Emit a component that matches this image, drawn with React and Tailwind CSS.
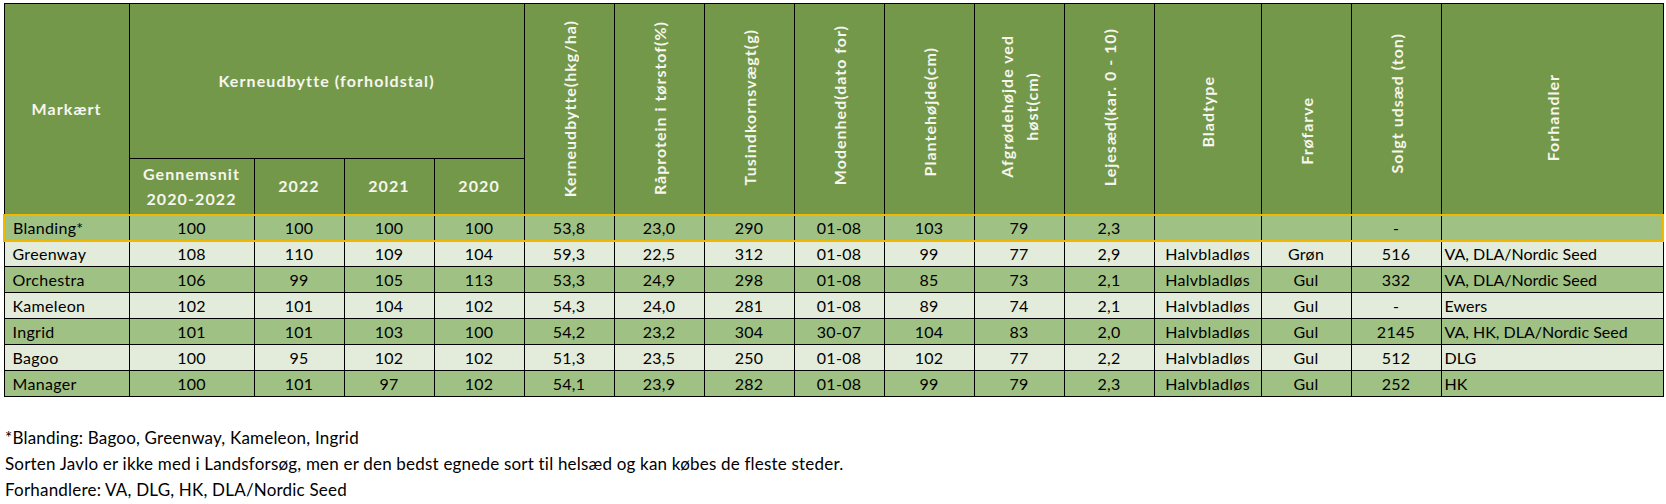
import React from 'react';

const rows = [
  ['Blanding*', '100', '100', '100', '100', '53,8', '23,0', '290', '01-08', '103', '79', '2,3', '', '', '-', ''],
  ['Greenway', '108', '110', '109', '104', '59,3', '22,5', '312', '01-08', '99', '77', '2,9', 'Halvbladløs', 'Grøn', '516', 'VA, DLA/Nordic Seed'],
  ['Orchestra', '106', '99', '105', '113', '53,3', '24,9', '298', '01-08', '85', '73', '2,1', 'Halvbladløs', 'Gul', '332', 'VA, DLA/Nordic Seed'],
  ['Kameleon', '102', '101', '104', '102', '54,3', '24,0', '281', '01-08', '89', '74', '2,1', 'Halvbladløs', 'Gul', '-', 'Ewers'],
  ['Ingrid', '101', '101', '103', '100', '54,2', '23,2', '304', '30-07', '104', '83', '2,0', 'Halvbladløs', 'Gul', '2145', 'VA, HK, DLA/Nordic Seed'],
  ['Bagoo', '100', '95', '102', '102', '51,3', '23,5', '250', '01-08', '102', '77', '2,2', 'Halvbladløs', 'Gul', '512', 'DLG'],
  ['Manager', '100', '101', '97', '102', '54,1', '23,9', '282', '01-08', '99', '79', '2,3', 'Halvbladløs', 'Gul', '252', 'HK'],
];

const widths = [125, 125, 90, 90, 90, 90, 90, 90, 90, 90, 90, 90, 107, 90, 90, 222];

// shift = nudge to follow where each heading sits in the sheet
const rotated = [
  { lines: ['Kerneudbytte(hkg/ha)'], shift: 'translate-y-0' },
  { lines: ['Råprotein i tørstof(%)'], shift: 'translate-y-[-1px]' },
  { lines: ['Tusindkornsvægt(g)'], shift: 'translate-y-[-2px]' },
  { lines: ['Modenhed(dato for)'], shift: 'translate-y-[-4px]' },
  { lines: ['Plantehøjde(cm)'], shift: 'translate-y-[3px]' },
  { lines: ['Afgrødehøjde ved', 'høst(cm)'], shift: 'translate-y-[-2px]' },
  { lines: ['Lejesæd(kar. 0 - 10)'], shift: 'translate-y-[-2px]' },
  { lines: ['Bladtype'], shift: 'translate-y-[3px]' },
  { lines: ['Frøfarve'], shift: 'translate-y-[22px]' },
  { lines: ['Solgt udsæd (ton)'], shift: 'translate-y-[-5px]' },
  { lines: ['Forhandler'], shift: 'translate-y-[9px]' },
];

function RotatedHead({ lines, shift }) {
  return (
    <th rowSpan={2} className="border border-black p-0 align-middle">
      <div className="flex h-[205px] items-center justify-center">
        <span className={`[writing-mode:vertical-rl] rotate-180 ${shift} text-center text-[16px] leading-[25px] tracking-[1px]`}>
          {lines.map((l, i) => (
            <React.Fragment key={i}>
              {i > 0 && <br />}
              {l}
            </React.Fragment>
          ))}
        </span>
      </div>
    </th>
  );
}

export default function App() {
  return (
    <div className="w-[1666px] h-[504px] bg-white pt-[3px] pl-[3px] font-['Lato','Liberation_Sans',sans-serif] text-[16px] text-black overflow-hidden">
      <table className="table-fixed border-collapse w-[1660px]">
        <colgroup>
          {widths.map((w, i) => (
            <col key={i} style={{ width: w }} />
          ))}
        </colgroup>
        <thead className="bg-[#74984a] text-[#f6f6ee] font-bold">
          <tr className="h-[155px] text-[16px] tracking-[1.1px]">
            <th rowSpan={2} className="border border-black p-0 align-middle">Markært</th>
            <th colSpan={4} className="border border-black p-0 align-middle">Kerneudbytte (forholdstal)</th>
            {rotated.map((h, i) => (
              <RotatedHead key={i} lines={h.lines} shift={h.shift} />
            ))}
          </tr>
          <tr className="h-[56px] text-[16px] tracking-[1.1px]">
            <th className="border border-black p-0 leading-[25px]">
              Gennemsnit
              <br />
              2020-2022
            </th>
            <th className="border border-black p-0">2022</th>
            <th className="border border-black p-0">2021</th>
            <th className="border border-black p-0">2020</th>
          </tr>
        </thead>
        <tbody className="tracking-[0.3px]">
          {rows.map((r, ri) => {
            const first = ri === 0;
            const bg = ri % 2 === 0 ? 'bg-[#a0c184]' : 'bg-[#e3ecda]';
            return (
              <tr key={ri} className={`h-[26px] ${bg}`}>
                {r.map((c, ci) => {
                  let align = 'text-center';
                  if (ci === 0) align = 'text-left pl-[8px]';
                  if (ci === 15) align = 'text-left pl-[3px] tracking-normal';
                  let edge = 'border border-black';
                  if (first) {
                    edge = 'border border-black border-y-2 border-y-[#f2b700]';
                    if (ci === 0) edge += ' border-l-2 border-l-[#f2b700]';
                    if (ci === 15) edge += ' border-r-2 border-r-[#f2b700]';
                  }
                  return (
                    <td key={ci} className={`${edge} ${align} p-0 leading-[24px] whitespace-nowrap`}>
                      {c}
                    </td>
                  );
                })}
              </tr>
            );
          })}
        </tbody>
      </table>
      <div className="mt-[28px] pl-[2px] text-[17px] leading-[26px] tracking-[0.2px]">
        <p>*Blanding: Bagoo, Greenway, Kameleon, Ingrid</p>
        <p>Sorten Javlo er ikke med i Landsforsøg, men er den bedst egnede sort til helsæd og kan købes de fleste steder.</p>
        <p>Forhandlere: VA, DLG, HK, DLA/Nordic Seed</p>
      </div>
    </div>
  );
}
